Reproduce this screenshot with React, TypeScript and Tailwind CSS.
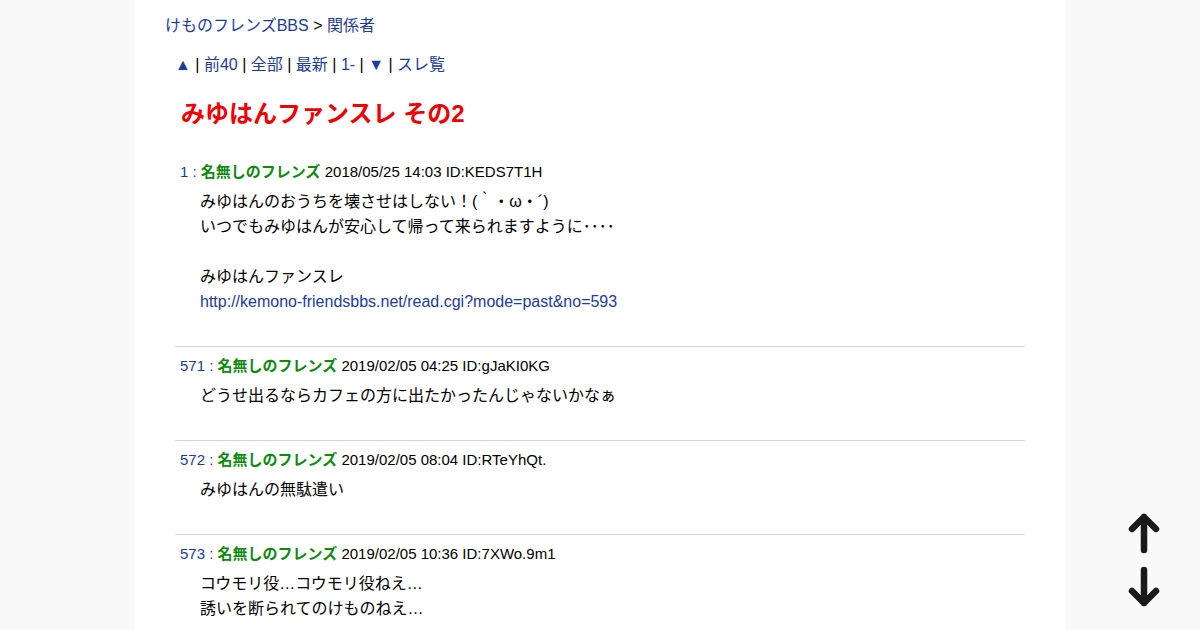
import React from "react";

const LINK = "text-[#1e3c96]";

function Post({
  no,
  date,
  id,
  lines,
  first,
}: {
  no: string;
  date: string;
  id: string;
  lines: (string | { url: string })[];
  first?: boolean;
}) {
  return (
    <div>
      {!first && <div className="h-px bg-[#d4d4d4]" />}
      <div className={first ? "" : "pt-[9px]"}>
        <div className="pl-[5px] text-[15px] leading-[20px] whitespace-nowrap">
          <span className={LINK}>{no} : </span>
          <span className="font-bold text-[#0f8a0f]">名無しのフレンズ</span>
          <span className="text-black"> {date} ID:{id}</span>
        </div>
        <div className="pl-[25px] pt-[7px] pb-[32px] text-[16px] leading-[25px] text-black">
          {lines.map((l, i) =>
            typeof l === "string" ? (
              <div key={i} className="h-[25px] whitespace-nowrap">
                {l}
              </div>
            ) : (
              <div key={i} className="h-[25px] whitespace-nowrap">
                <a className={LINK}>{l.url}</a>
              </div>
            )
          )}
        </div>
      </div>
    </div>
  );
}

export default function App() {
  return (
    <div
      className="min-h-[630px] bg-[#f9f9f9]"
      style={{ fontFamily: '"Liberation Sans", "Noto Sans CJK JP", sans-serif' }}
    >
      <div className="mx-auto w-[932px] bg-white min-h-[630px] pt-[14px]">
        <div className="pl-[31px] text-[16px] leading-[24px] text-black">
          <a className={LINK}>けものフレンズBBS</a> &gt; <a className={LINK}>関係者</a>
        </div>
        <div className="pl-[41px] mt-[15px] text-[16px] leading-[24px] text-black">
          <a className={LINK}>▲</a> | <a className={LINK}>前40</a> | <a className={LINK}>全部</a> |{" "}
          <a className={LINK}>最新</a> | <a className={LINK}>1-</a> | <a className={LINK}>▼</a> |{" "}
          <a className={LINK}>スレ覧</a>
        </div>
        <h1 className="pl-[47px] mt-[21px] text-[24px] leading-[32px] font-bold text-[#ee0000]">
          みゆはんファンスレ その2
        </h1>
        <div className="mx-[41px] mt-[32px]">
          <Post
            first
            no="1"
            date="2018/05/25 14:03"
            id="KEDS7T1H"
            lines={[
              "みゆはんのおうちを壊させはしない！(｀・ω・´)",
              "いつでもみゆはんが安心して帰って来られますように････",
              "",
              "みゆはんファンスレ",
              { url: "http://kemono-friendsbbs.net/read.cgi?mode=past&no=593" },
            ]}
          />
          <Post
            no="571"
            date="2019/02/05 04:25"
            id="gJaKI0KG"
            lines={["どうせ出るならカフェの方に出たかったんじゃないかなぁ"]}
          />
          <Post no="572" date="2019/02/05 08:04" id="RTeYhQt." lines={["みゆはんの無駄遣い"]} />
          <Post
            no="573"
            date="2019/02/05 10:36"
            id="7XWo.9m1"
            lines={["コウモリ役…コウモリ役ねえ…", "誘いを断られてのけものねえ…"]}
          />
        </div>
      </div>
      <div className="fixed left-[1124px] top-[512px] flex flex-col gap-[12px]">
        <svg width="40" height="42" viewBox="0 0 40 42">
          <path
            d="M20 38 L20 5 M8 17 L20 5 L32 17"
            fill="none"
            stroke="#1a1a1a"
            strokeWidth="6.5"
            strokeLinecap="round"
            strokeLinejoin="round"
          />
        </svg>
        <svg width="40" height="42" viewBox="0 0 40 42">
          <path
            d="M20 4 L20 37 M8 25 L20 37 L32 25"
            fill="none"
            stroke="#1a1a1a"
            strokeWidth="6.5"
            strokeLinecap="round"
            strokeLinejoin="round"
          />
        </svg>
      </div>
    </div>
  );
}
